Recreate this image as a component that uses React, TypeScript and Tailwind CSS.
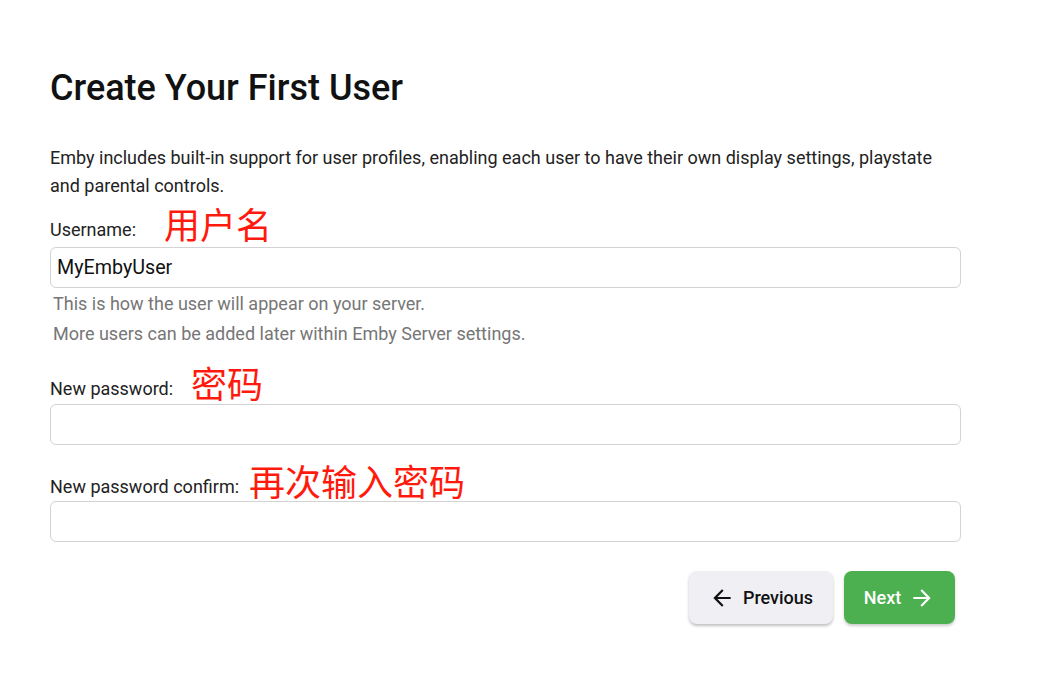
import React from "react";

const ArrowLeft = () => (
  <svg width="26" height="26" viewBox="0 0 24 24" fill="currentColor">
    <path d="M20 11H7.83l5.59-5.59L12 4l-8 8 8 8 1.41-1.41L7.83 13H20v-2z" />
  </svg>
);
const ArrowRight = () => (
  <svg width="26" height="26" viewBox="0 0 24 24" fill="currentColor">
    <path d="M12 4l-1.41 1.41L16.17 11H4v2h12.17l-5.58 5.59L12 20l8-8z" />
  </svg>
);

const cjk = { fontFamily: '"Noto Sans CJK SC", sans-serif' };

export default function App() {
  return (
    <div className="w-[1045px] h-[673px] bg-white text-[#1c1c1c]" style={{ fontFamily: "Roboto, sans-serif" }}>
      <div className="pl-[50px] pt-[66px] w-[961px]">
        <h1 className="text-[36px] leading-[44px] font-medium text-[#111]">Create Your First User</h1>
        <p className="mt-[34px] text-[18px] leading-[28px] text-[#222]">
          Emby includes built-in support for user profiles, enabling each user to have their own display settings, playstate and parental controls.
        </p>
        <div className="mt-[4px] flex items-end h-[38px]">
          <span className="text-[18px] leading-[24px] text-[#222]">Username:</span>
          <span className="ml-[28px] text-[36px] leading-[38px] text-[#ff1a0d]" style={cjk}>用户名</span>
        </div>
        <div className="mt-[5px] h-[41px] border border-[#d3d3d3] rounded-[6px] flex items-center px-[6px] text-[19.7px] text-[#111]">MyEmbyUser</div>
        <div className="pl-[3px] mt-[1px] text-[18px] leading-[30px] text-[#767676]">
          <div>This is how the user will appear on your server.</div>
          <div>More users can be added later within Emby Server settings.</div>
        </div>
        <div className="mt-[14px] flex items-end h-[38px]">
          <span className="text-[18px] leading-[24px] text-[#222]">New password:</span>
          <span className="ml-[18px] text-[36px] leading-[38px] text-[#ff1a0d]" style={cjk}>密码</span>
        </div>
        <div className="mt-[3px] h-[41px] border border-[#d3d3d3] rounded-[6px]"></div>
        <div className="mt-[16px] flex items-end h-[38px]">
          <span className="text-[18px] leading-[24px] text-[#222]">New password confirm:</span>
          <span className="ml-[10px] text-[36px] leading-[38px] text-[#ff1a0d]" style={cjk}>再次输入密码</span>
        </div>
        <div className="mt-[2px] h-[41px] border border-[#d3d3d3] rounded-[6px]"></div>
        <div className="mt-[29px] flex justify-end gap-[11px] pr-[6px]">
          <button className="h-[53px] w-[144px] rounded-[8px] bg-[#f0eff4] shadow-[0_2px_3px_rgba(0,0,0,0.25)] flex items-center justify-center gap-[8px] text-[18px] font-medium text-[#111]">
            <ArrowLeft />
            <span>Previous</span>
          </button>
          <button className="h-[53px] w-[111px] rounded-[8px] bg-[#4caf50] shadow-[0_2px_3px_rgba(0,0,0,0.2)] flex items-center justify-center gap-[8px] text-[18px] font-medium text-white">
            <span>Next</span>
            <ArrowRight />
          </button>
        </div>
      </div>
    </div>
  );
}
